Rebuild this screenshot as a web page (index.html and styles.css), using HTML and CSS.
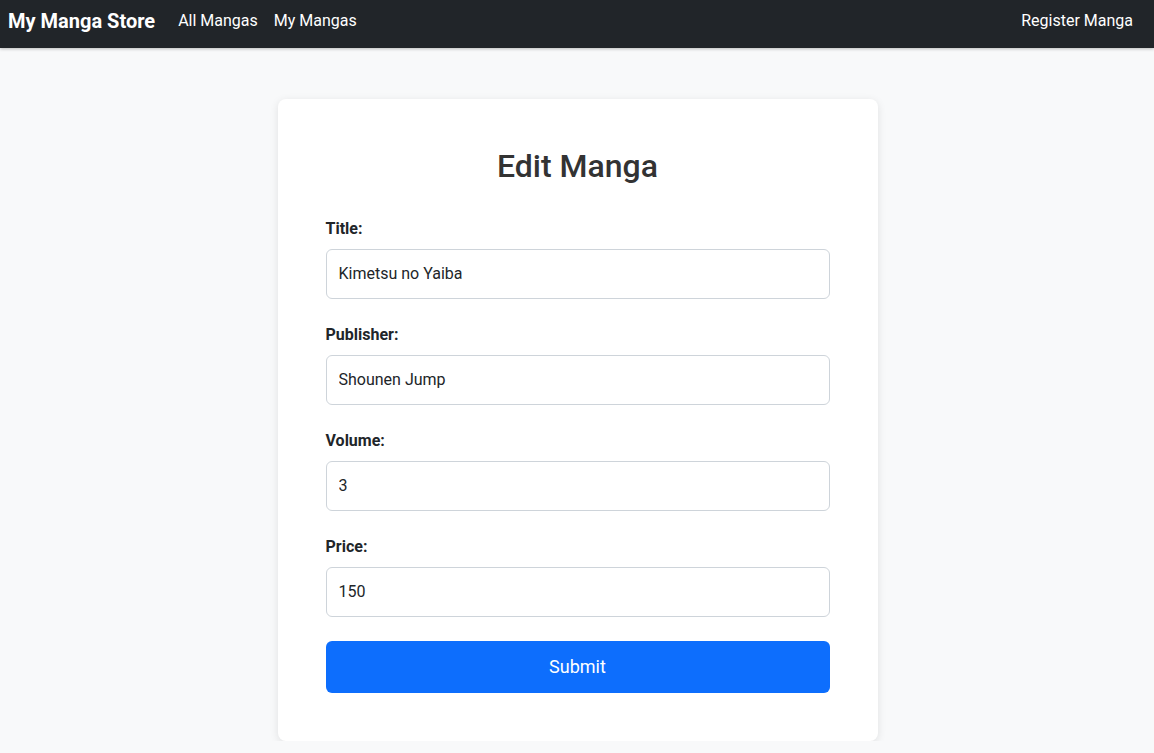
FILE: index.html
```html
<!DOCTYPE html>
<html lang="en">
<head>
<meta charset="utf-8">
<title>Edit Manga</title>
<link rel="stylesheet" href="styles.css">
</head>
<body>
<nav class="navbar">
  <div class="nav-left">
    <a class="brand" href="#">My Manga Store</a>
    <a class="nav-link" href="#">All Mangas</a>
    <a class="nav-link" href="#">My Mangas</a>
  </div>
  <div class="nav-right">
    <a class="nav-link" href="#">Register Manga</a>
  </div>
</nav>
<main class="main">
  <form class="card">
    <h2 class="card-title">Edit Manga</h2>
    <div class="group">
      <label class="label" for="title">Title:</label>
      <input class="input" id="title" type="text" value="Kimetsu no Yaiba">
    </div>
    <div class="group">
      <label class="label" for="publisher">Publisher:</label>
      <input class="input" id="publisher" type="text" value="Shounen Jump">
    </div>
    <div class="group">
      <label class="label" for="volume">Volume:</label>
      <input class="input" id="volume" type="text" value="3">
    </div>
    <div class="group">
      <label class="label" for="price">Price:</label>
      <input class="input" id="price" type="text" value="150">
    </div>
    <button class="submit" type="button">Submit</button>
  </form>
</main>
</body>
</html>
```
FILE: styles.css
```css
* { box-sizing: border-box; }
html, body { margin: 0; padding: 0; }
body {
  font-family: Roboto, "Liberation Sans", Arial, sans-serif;
  background: #f8f9fa;
  color: #212529;
  font-size: 16px;
  line-height: 1.5;
}
a { text-decoration: none; }
.navbar {
  height: 48px;
  background: #212529;
  display: flex;
  align-items: flex-start;
  justify-content: space-between;
  padding: 9px 21px 0 8px;
  box-shadow: 0 1px 3px rgba(0,0,0,0.25);
}
.nav-left { display: flex; align-items: center; }
.brand {
  color: #fff;
  font-weight: 700;
  font-size: 20px;
  line-height: 24px;
  margin-right: 23px;
}
.nav-link {
  color: #fff;
  font-size: 16px;
  line-height: 22px;
  margin-right: 16px;
}
.nav-right .nav-link { margin-right: 0; }
.main {
  display: flex;
  justify-content: center;
  padding: 51px 0 0 1px;
}
.card {
  width: 600px;
  background: #fff;
  border-radius: 8px;
  padding: 48px;
  box-shadow: 0 2px 8px rgba(0,0,0,0.1);
}
.card-title {
  margin: 0 0 32px;
  text-align: center;
  font-size: 32px;
  font-weight: 500;
  line-height: 38px;
  color: #333;
}
.group { margin-bottom: 24px; }
.label {
  display: block;
  font-weight: 700;
  margin-bottom: 8px;
}
.input {
  display: block;
  width: 100%;
  height: 50px;
  padding: 11px 12px 13px;
  font-family: inherit;
  font-size: 16px;
  color: #212529;
  border: 1px solid #ced4da;
  border-radius: 6px;
  background: #fff;
}
.submit {
  display: block;
  width: 100%;
  height: 52px;
  margin-top: 0;
  padding: 0 0 2px;
  border: none;
  border-radius: 6px;
  background: #0d6efd;
  color: #fff;
  font-family: inherit;
  font-size: 18px;
}
```
